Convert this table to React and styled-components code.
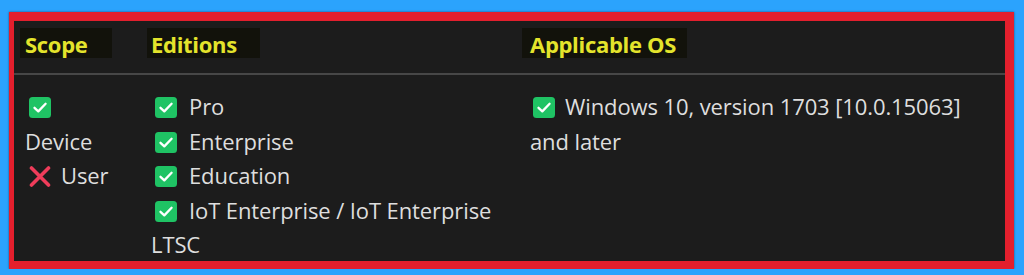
import React from "react";
import styled, { createGlobalStyle } from "styled-components";

const Global = createGlobalStyle`
  html, body { margin: 0; padding: 0; background: #2ba3fd; }
  body { font-family: "Open Sans", "Noto Sans", sans-serif; }
`;

const Frame = styled.div`
  box-sizing: border-box;
  margin: 12px 0 0 9px;
  width: 1005px;
  height: 257px;
  border-style: solid;
  border-color: #e31f2d;
  border-width: 9px 9px 8px 5px;
  background: #1c1c1c;
  box-shadow: 0 0 2px rgba(0,0,0,0.5);
  overflow: hidden;
`;

const Table = styled.div`
  display: grid;
  grid-template-columns: 126px 379px 1fr;
`;

const HeadCell = styled.div`
  height: 54px;
  border-bottom: 2px solid #474747;
  padding: 7px 0 0 ${p => p.$pad}px;
  box-sizing: border-box;
`;

const HeadLabel = styled.div`
  display: inline-block;
  box-sizing: border-box;
  width: ${p => p.$w}px;
  height: 30px;
  padding-left: ${p => p.$in}px;
  background: #12120b;
  color: #e4e42c;
  font-weight: 700;
  font-size: 22px;
  line-height: 32px;
  letter-spacing: -0.3px;
`;

const Cell = styled.div`
  padding: 14px 0 0 11px;
  width: ${p => p.$w}px;
  color: #dedede;
  font-size: 22px;
  line-height: 34.5px;
  letter-spacing: -0.1px;
`;

const Line = styled.div``;

const IconWrap = styled.span`
  display: inline-block;
  vertical-align: -3px;
  margin-left: ${p => p.$ml ?? 4}px;
  margin-right: ${p => p.$mr ?? 12}px;
  line-height: 0;
`;

const Check = ({ ml, mr }) => (
  <IconWrap $ml={ml} $mr={mr}>
    <svg width="22" height="21" viewBox="0 0 22 21">
      <rect x="0" y="0" width="22" height="21" rx="3.5" fill="#1fc364" />
      <path d="M5.5 10.8 L9.3 14.4 L16.6 6.8" fill="none" stroke="#fff" strokeWidth="2.3" strokeLinecap="round" strokeLinejoin="round" />
    </svg>
  </IconWrap>
);

const Cross = () => (
  <IconWrap $ml={4} $mr={10}>
    <svg width="22" height="21" viewBox="0 0 22 21">
      <path d="M2.5 2 L19.5 19 M19.5 2 L2.5 19" stroke="#ef3c5a" strokeWidth="3.6" strokeLinecap="round" />
    </svg>
  </IconWrap>
);

export default function App() {
  return (
    <>
      <Global />
      <Frame>
        <Table>
          <HeadCell $pad={6}><HeadLabel $w={92} $in={5}>Scope</HeadLabel></HeadCell>
          <HeadCell $pad={7}><HeadLabel $w={113} $in={4}>Editions</HeadLabel></HeadCell>
          <HeadCell $pad={3}><HeadLabel $w={165} $in={8}>Applicable OS</HeadLabel></HeadCell>

          <Cell $w={100}>
            <Line><Check />Device</Line>
            <Line><Cross />User</Line>
          </Cell>
          <Cell $w={345}>
            <Line><Check />Pro</Line>
            <Line><Check />Enterprise</Line>
            <Line><Check />Education</Line>
            <Line><Check />IoT Enterprise / IoT Enterprise LTSC</Line>
          </Cell>
          <Cell $w={445}>
            <Line><Check ml={3} mr={10} />Windows 10, version 1703 [10.0.15063] and later</Line>
          </Cell>
        </Table>
      </Frame>
    </>
  );
}
